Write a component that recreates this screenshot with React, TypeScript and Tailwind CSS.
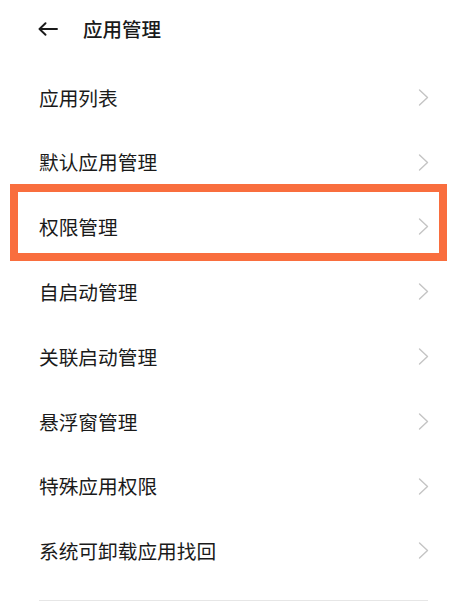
const items = [
  "应用列表",
  "默认应用管理",
  "权限管理",
  "自启动管理",
  "关联启动管理",
  "悬浮窗管理",
  "特殊应用权限",
  "系统可卸载应用找回",
];

function Chevron() {
  return (
    <svg width="11" height="17" viewBox="0 0 11 17" fill="none" className="shrink-0">
      <path d="M1.5 1 L9.5 8.5 L1.5 16" stroke="#c4c4c4" strokeWidth="1.4" strokeLinecap="round" strokeLinejoin="round" />
    </svg>
  );
}

export default function App() {
  return (
    <div
      className="relative w-[458px] h-[612px] overflow-hidden bg-white text-[#1a1a1a]"
      style={{ fontFamily: '"Noto Sans CJK SC", "Noto Sans", sans-serif' }}
    >
      <header className="flex items-center h-[57px] pl-[38px]">
        <svg width="20" height="14" viewBox="0 0 20 14" fill="none">
          <path d="M19 7 H2 M7.5 1.2 L1.5 7 L7.5 12.8" stroke="#1a1a1a" strokeWidth="1.9" strokeLinecap="round" strokeLinejoin="round" />
        </svg>
        <h1 className="ml-[25px] text-[19.5px] font-medium leading-none">应用管理</h1>
      </header>

      <ul className="mt-[8px] pl-[39px] pr-[29px]">
        {items.map((label) => (
          <li key={label} className="flex items-center justify-between h-[64.8px]">
            <span className="text-[19.7px] leading-none">{label}</span>
            <Chevron />
          </li>
        ))}
      </ul>

      <div className="mt-[17px] ml-[39px] mr-[30px] h-px bg-[#e6e6e6]" />

      <div className="absolute left-[10px] top-[184px] w-[437px] h-[77px] border-[8px] border-[#f96e3e]" />
    </div>
  );
}
